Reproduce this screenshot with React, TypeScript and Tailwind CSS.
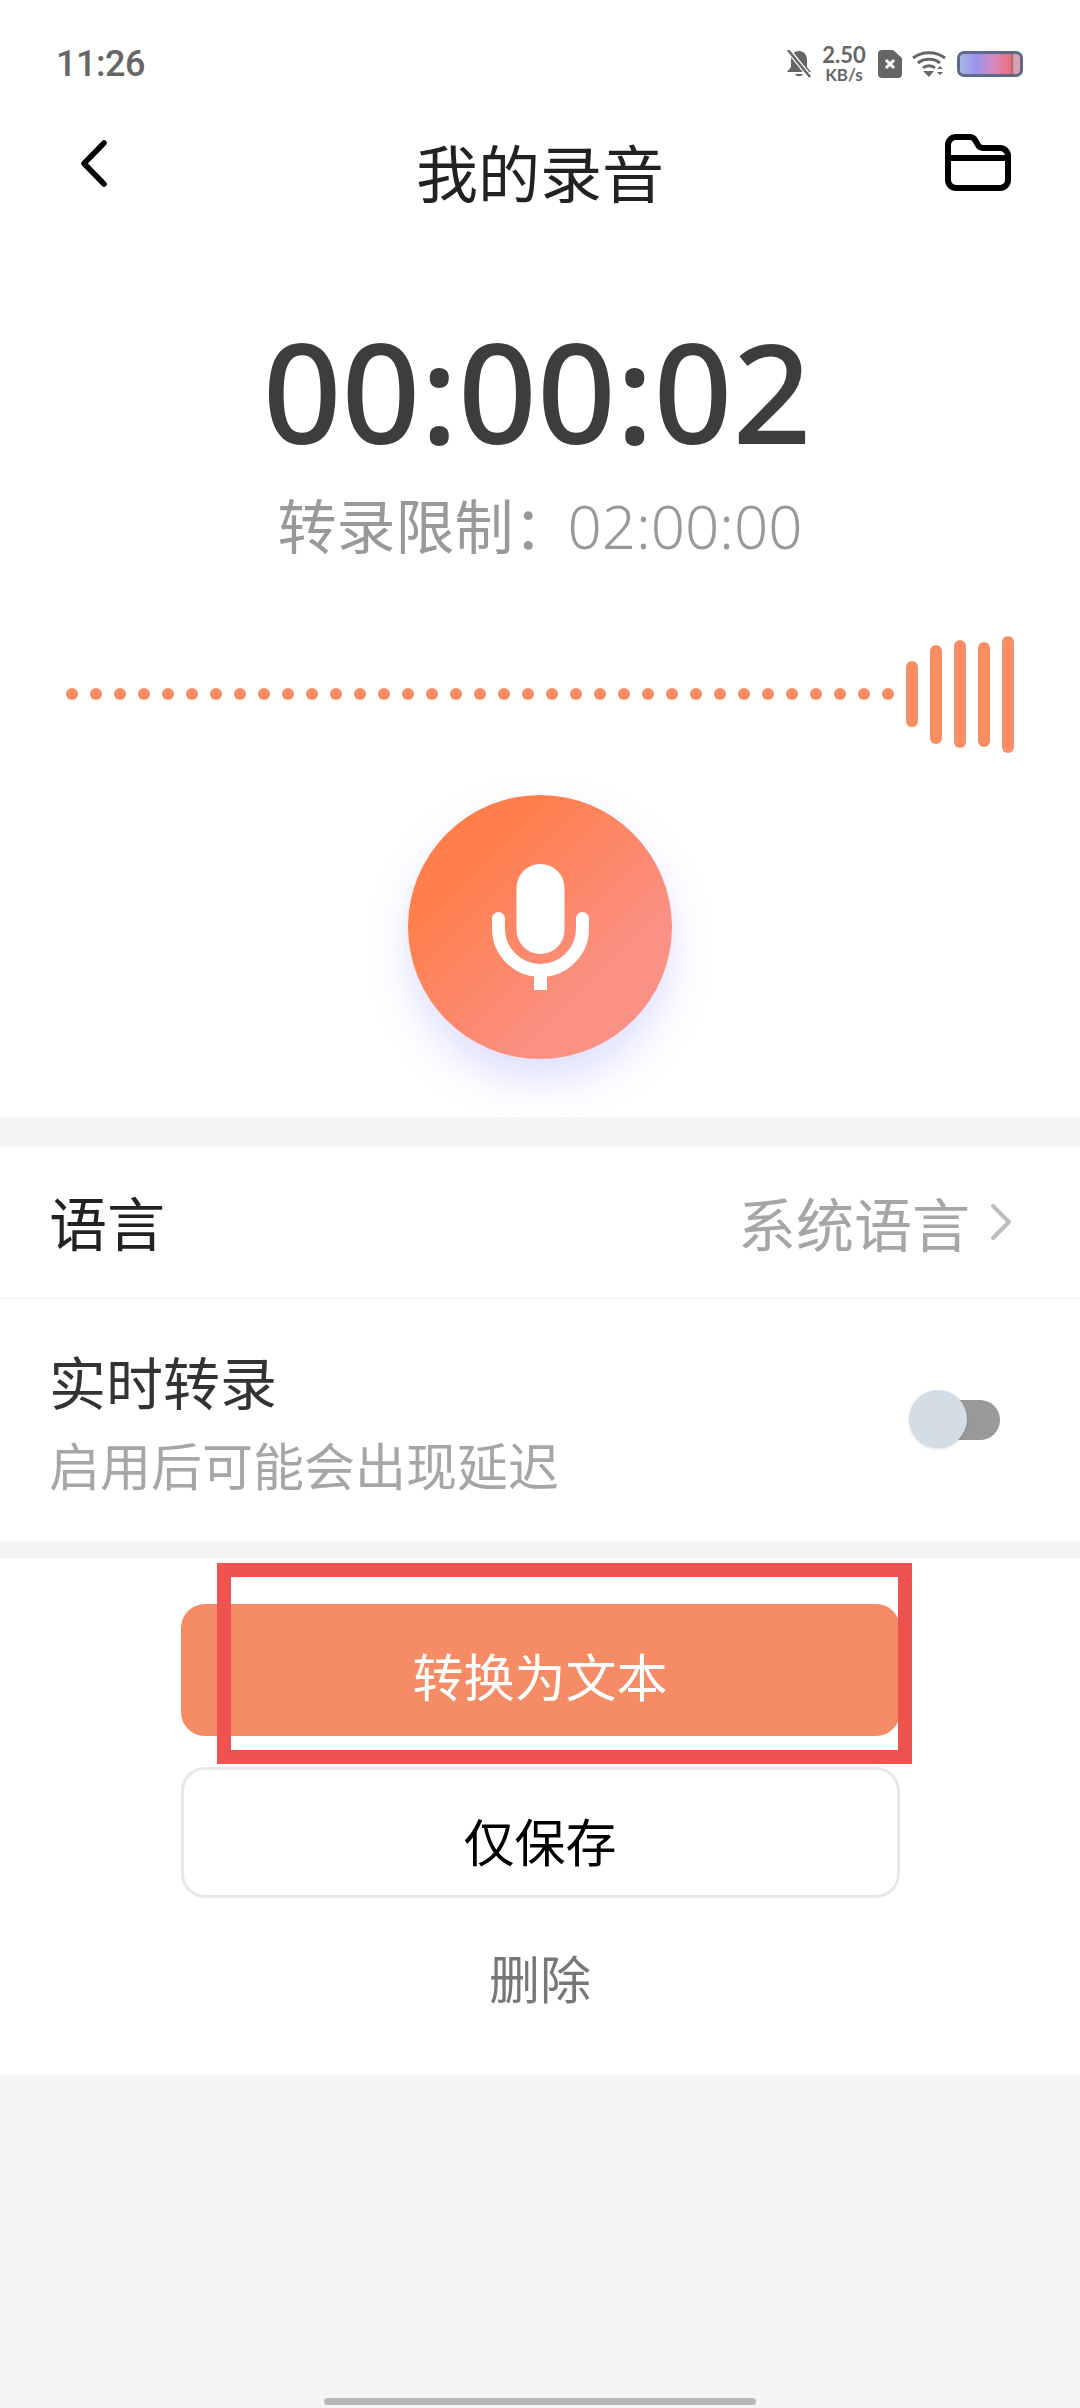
const dots = Array.from({ length: 35 }, (_, i) => i);
const bars = ["h-[66px]", "h-[99px]", "h-[108px]", "h-[105px]", "h-[117px]"];

function StatusIcons() {
  return (
    <div className="flex items-center">
      <svg width="28" height="28" viewBox="0 0 26 28" className="mr-[9px]">
        <path d="M13 1c-5 0-8 4-8 9v7l-4 5h24l-4-5v-7c0-5-3-9-8-9zM9 24c1 3 7 3 8 0z" fill="#666" />
        <path d="M3 1l21 26" stroke="#fff" strokeWidth="5" />
        <path d="M2 0l22 27" stroke="#666" strokeWidth="2.500" />
      </svg>
      <div className="flex flex-col items-center w-[44px] mr-[12px] text-[#666] font-['Lato'] font-bold leading-none">
        <span className="text-[22px] leading-[22px]">2.50</span>
        <span className="text-[17px] leading-[18px]">KB/s</span>
      </div>
      <svg width="24" height="28" viewBox="0 0 24 28" className="mr-[10px]">
        <path d="M4 0h11l9 8v16a4 4 0 0 1-4 4H4a4 4 0 0 1-4-4V4a4 4 0 0 1 4-4z" fill="#666" />
        <path d="M8 10l8 8M16 10l-8 8" stroke="#fff" strokeWidth="3" />
      </svg>
      <svg width="34" height="26" viewBox="0 0 34 26" className="mr-[11px]" fill="none" stroke="#666" strokeWidth="3">
        <path d="M1 7c9-7 23-7 32 0" />
        <path d="M6 12c6-5 16-5 22 0" />
        <path d="M11 17c3-3 9-3 12 0" />
        <path d="M11 20h11l-5 6z" fill="#666" stroke="none" />
        <path d="M25 18l3-3 3 3zM25 21h6l-3 3z" fill="#666" stroke="none" />
      </svg>
      <div className="w-[66px] h-[26px] rounded-[7px] border-[3px] border-[#5f6a8a] bg-[linear-gradient(90deg,#a9b4e6_0%,#9a94ee_28%,#d58ac0_55%,#ea6f78_84%,#8f6a80_87%,#d9a0b0_90%,#d9a0b0_100%)]" />
    </div>
  );
}

function MicIcon() {
  return (
    <svg width="97" height="126" viewBox="0 0 97 126" fill="none">
      <rect x="24.500" y="0" width="48" height="90" rx="24" fill="#fff" />
      <path d="M6.500 54.500v10a42 42 0 0 0 84 0v-10" stroke="#fff" strokeWidth="13" strokeLinecap="round" />
      <rect x="42" y="108" width="13" height="18" fill="#fff" />
    </svg>
  );
}

export default function App() {
  return (
    <div className="relative w-[1080px] h-[2408px] bg-[#f5f5f5] font-['Noto_Sans_CJK_SC','Noto_Sans',sans-serif] overflow-hidden">
      <div className="bg-white h-[1117px]">
        <div className="h-[126px] pt-[44px] pl-[56px] pr-[57px] flex items-start justify-between">
          <span className="text-[36px] leading-[40px] font-medium tracking-[-0.5px] text-[#666] font-['Roboto']">11:26</span>
          <StatusIcons />
        </div>
        <div className="relative h-[90px] flex items-start justify-center">
          <span className="text-[62px] leading-[84px] text-[#222] mt-[3px]">我的录音</span>
          <svg width="27" height="47" viewBox="0 0 27 47" fill="none" className="absolute left-[80px] top-[14px]">
            <path d="M24 3L4 23.500 24 44" stroke="#000" strokeWidth="5.500" strokeLinecap="round" strokeLinejoin="round" />
          </svg>
          <svg width="66" height="57" viewBox="0 0 66 57" fill="none" className="absolute left-[945px] top-[8px]">
            <path d="M3 11a8 8 0 0 1 8-8h13c3 0 5 1 6 3l3 5c1 2 3 3 5 3h17a8 8 0 0 1 8 8v24a8 8 0 0 1-8 8H11a8 8 0 0 1-8-8z" stroke="#000" strokeWidth="6" strokeLinejoin="round" />
            <path d="M3 24h60" stroke="#000" strokeWidth="6" />
          </svg>
        </div>
        <div className="flex flex-col items-center mt-[92px]">
          <span className="text-[138px] leading-[164px] font-medium text-[#3d3d3d] font-['Noto_Sans'] pr-[6px]">00:00:02</span>
          <span className="mt-[12px] text-[59px] leading-[80px] text-[#999]">转录限制：<span className="font-['Noto_Sans'] font-light text-[60px] ml-[-5px]">02:00:00</span></span>
        </div>
        <div className="flex items-center pl-[66px] h-[120px] mt-[68px]">
          <div className="flex gap-[12px]">
            {dots.map((i) => (
              <div key={i} className="w-[12px] h-[12px] rounded-full bg-[#f98d63]" />
            ))}
          </div>
          <div className="flex items-center gap-[12px] ml-[12px]">
            {bars.map((h) => (
              <div key={h} className={`w-[12px] rounded-full bg-[#f98d63] ${h}`} />
            ))}
          </div>
        </div>
        <div className="flex justify-center mt-[41px]">
          <div className="w-[264px] h-[264px] rounded-full bg-[linear-gradient(135deg,#ff7e4c_25%,#fa9184_72%)] shadow-[0_22px_40px_rgba(140,140,255,0.28)] flex items-center justify-center">
            <MicIcon />
          </div>
        </div>
      </div>

      <div className="mt-[30px] bg-white">
        <div className="h-[150px] pl-[49px] pr-[68px] flex items-center justify-between">
          <span className="text-[58px] text-[#222] mt-[-2px]">语言</span>
          <div className="flex items-center">
            <span className="text-[58px] text-[#a6a6a6]">系统语言</span>
            <svg width="22" height="38" viewBox="0 0 22 38" fill="none" className="ml-[20px]">
              <path d="M3 3l16 16L3 35" stroke="#bdbdbd" strokeWidth="4" strokeLinecap="round" strokeLinejoin="round" />
            </svg>
          </div>
        </div>
        <div className="h-[2px] bg-[#f7f7f7]" />
        <div className="h-[242px] pl-[49px] pr-[80px] flex items-center justify-between">
          <div className="flex flex-col">
            <span className="text-[57px] leading-[80px] text-[#333] mt-[-2px]">实时转录</span>
            <span className="text-[51px] leading-[70px] text-[#a6a6a6] mt-[9px]">启用后可能会出现延迟</span>
          </div>
          <div className="relative w-[84px] h-[40px] rounded-full bg-[#999]">
            <div className="absolute left-[-7px] top-[-10px] w-[58px] h-[58px] rounded-full bg-[#d3dde5] shadow-[0_1px_3px_rgba(0,0,0,0.15)]" />
          </div>
        </div>
      </div>

      <div className="mt-[17px] h-[517px] bg-white flex flex-col items-center pt-[46px]">
        <button className="w-[719px] h-[132px] rounded-[24px] bg-[#f58c65] text-white text-[51px] pt-[10px]">转换为文本</button>
        <button className="w-[719px] h-[131px] mt-[31px] rounded-[24px] border-[3px] border-[#e8e8e8] bg-white text-black text-[51px] pt-[16px]">仅保存</button>
        <span className="mt-[44px] text-[51px] leading-[70px] text-[#777]">删除</span>
      </div>

      {/* red highlight drawn over the screenshot */}
      <div className="absolute left-[217px] top-[1563px] w-[695px] h-[201px] border-[14px] border-[#ef5350]" />

      <div className="absolute left-[324px] bottom-[3px] w-[432px] h-[7px] rounded-full bg-[#b8b8b8]" />
    </div>
  );
}
